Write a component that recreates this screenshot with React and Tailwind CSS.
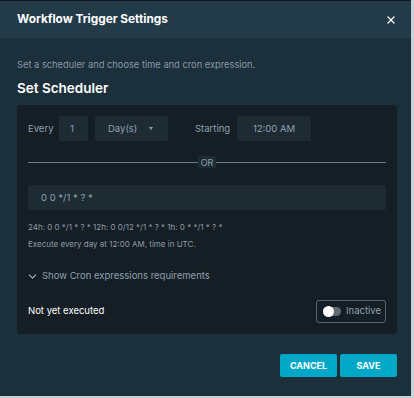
import { ChevronDown, X } from "lucide-react";

export default function App() {
  return (
    <div className="w-[414px] h-[398px] bg-[#c9d1d5]" style={{ fontFamily: "Inter, 'Noto Sans', sans-serif" }}>
      <div className="w-[411px] h-[396px] bg-[#1c303c] border-t border-[#0f1a20] flex flex-col">
        <div className="h-[37px] bg-[#233a48] flex items-center justify-between pl-[17px] pr-[14px]">
          <h1 className="text-[11.8px] font-bold text-white">Workflow Trigger Settings</h1>
          <X size={12} strokeWidth={2.5} className="text-white" />
        </div>

        <div className="pl-[17px] pr-[14px] flex flex-col">
          <p className="mt-[20px] text-[9.3px] text-[#8798a6]">Set a scheduler and choose time and cron expression.</p>
          <h2 className="mt-[10px] text-[13.5px] font-semibold text-white leading-none">Set Scheduler</h2>

          <div className="mt-[10px] bg-[#151e24] rounded-[3px] h-[229px] px-[11px] pt-[11px] flex flex-col">
            <div className="flex items-center h-[25px] text-[9.5px] text-[#8fa0b0]">
              <span className="w-[31px]">Every</span>
              <div className="w-[29px] h-[25px] bg-[#1e2b33] rounded-[2px] flex items-center pl-[11px] text-[#8fa0b0]">1</div>
              <div className="ml-[7px] w-[73px] h-[25px] bg-[#1e2b33] rounded-[2px] flex items-center pl-[13px] text-[#8fa0b0]">
                <span>Day(s)</span>
                <span className="ml-[12px] w-0 h-0 border-l-[2.5px] border-r-[2.5px] border-t-[3px] border-l-transparent border-r-transparent border-t-[#8fa0b0]"></span>
              </div>
              <span className="ml-[27px] w-[42px]">Starting</span>
              <div className="w-[74px] h-[25px] bg-[#1e2b33] rounded-[2px] flex items-center justify-center text-[#8fa0b0]">12:00 AM</div>
            </div>

            <div className="mt-[15px] flex items-center h-[12px]">
              <div className="flex-1 h-px bg-[#6b7a86]"></div>
              <div className="px-[3px] h-[12px] bg-[#1e2b33] text-[9px] text-[#8fa0b0] flex items-center">OR</div>
              <div className="flex-1 h-px bg-[#6b7a86]"></div>
            </div>

            <div className="mt-[17px] h-[25px] bg-[#1e2b33] rounded-[2px] flex items-center pl-[13px] text-[9.5px] text-[#8fa0b0]">
              0 0 */1 * ? *
            </div>

            <p className="mt-[13px] text-[8px] text-[#8d9caa] leading-none">24h: 0 0 */1 * ? * 12h: 0 0/12 */1 * ? * 1h: 0 * */1 * ? *</p>
            <p className="mt-[9px] text-[8px] text-[#8d9caa] leading-none">Execute every day at 12:00 AM, time in UTC.</p>

            <div className="mt-[21px] flex items-center text-[9.5px] text-[#8fa0b0]">
              <ChevronDown size={13} strokeWidth={2} className="text-[#a7b4bf] -ml-[2px]" />
              <span className="ml-[3px]">Show Cron expressions requirements</span>
            </div>

            <div className="mt-[16px] flex items-center justify-between">
              <span className="text-[9.5px] text-white">Not yet executed</span>
              <div className="w-[70px] h-[23px] border border-[#5b6770] rounded-[3px] flex items-center pl-[6px]">
                <div className="w-[18px] h-[9px] rounded-full bg-[#5f6a72] relative">
                  <div className="absolute left-0 top-[-1px] w-[11px] h-[11px] rounded-full bg-white"></div>
                </div>
                <span className="ml-[5px] text-[9.5px] text-[#8fa0b0]">Inactive</span>
              </div>
            </div>
          </div>

          <div className="mt-[20px] flex justify-end gap-[3px]">
            <button className="w-[57px] h-[23px] bg-[#00a8c8] rounded-[2px] text-white text-[9px] font-bold">CANCEL</button>
            <button className="w-[57px] h-[23px] bg-[#00a8c8] rounded-[2px] text-white text-[9px] font-bold">SAVE</button>
          </div>
        </div>
      </div>
    </div>
  );
}
